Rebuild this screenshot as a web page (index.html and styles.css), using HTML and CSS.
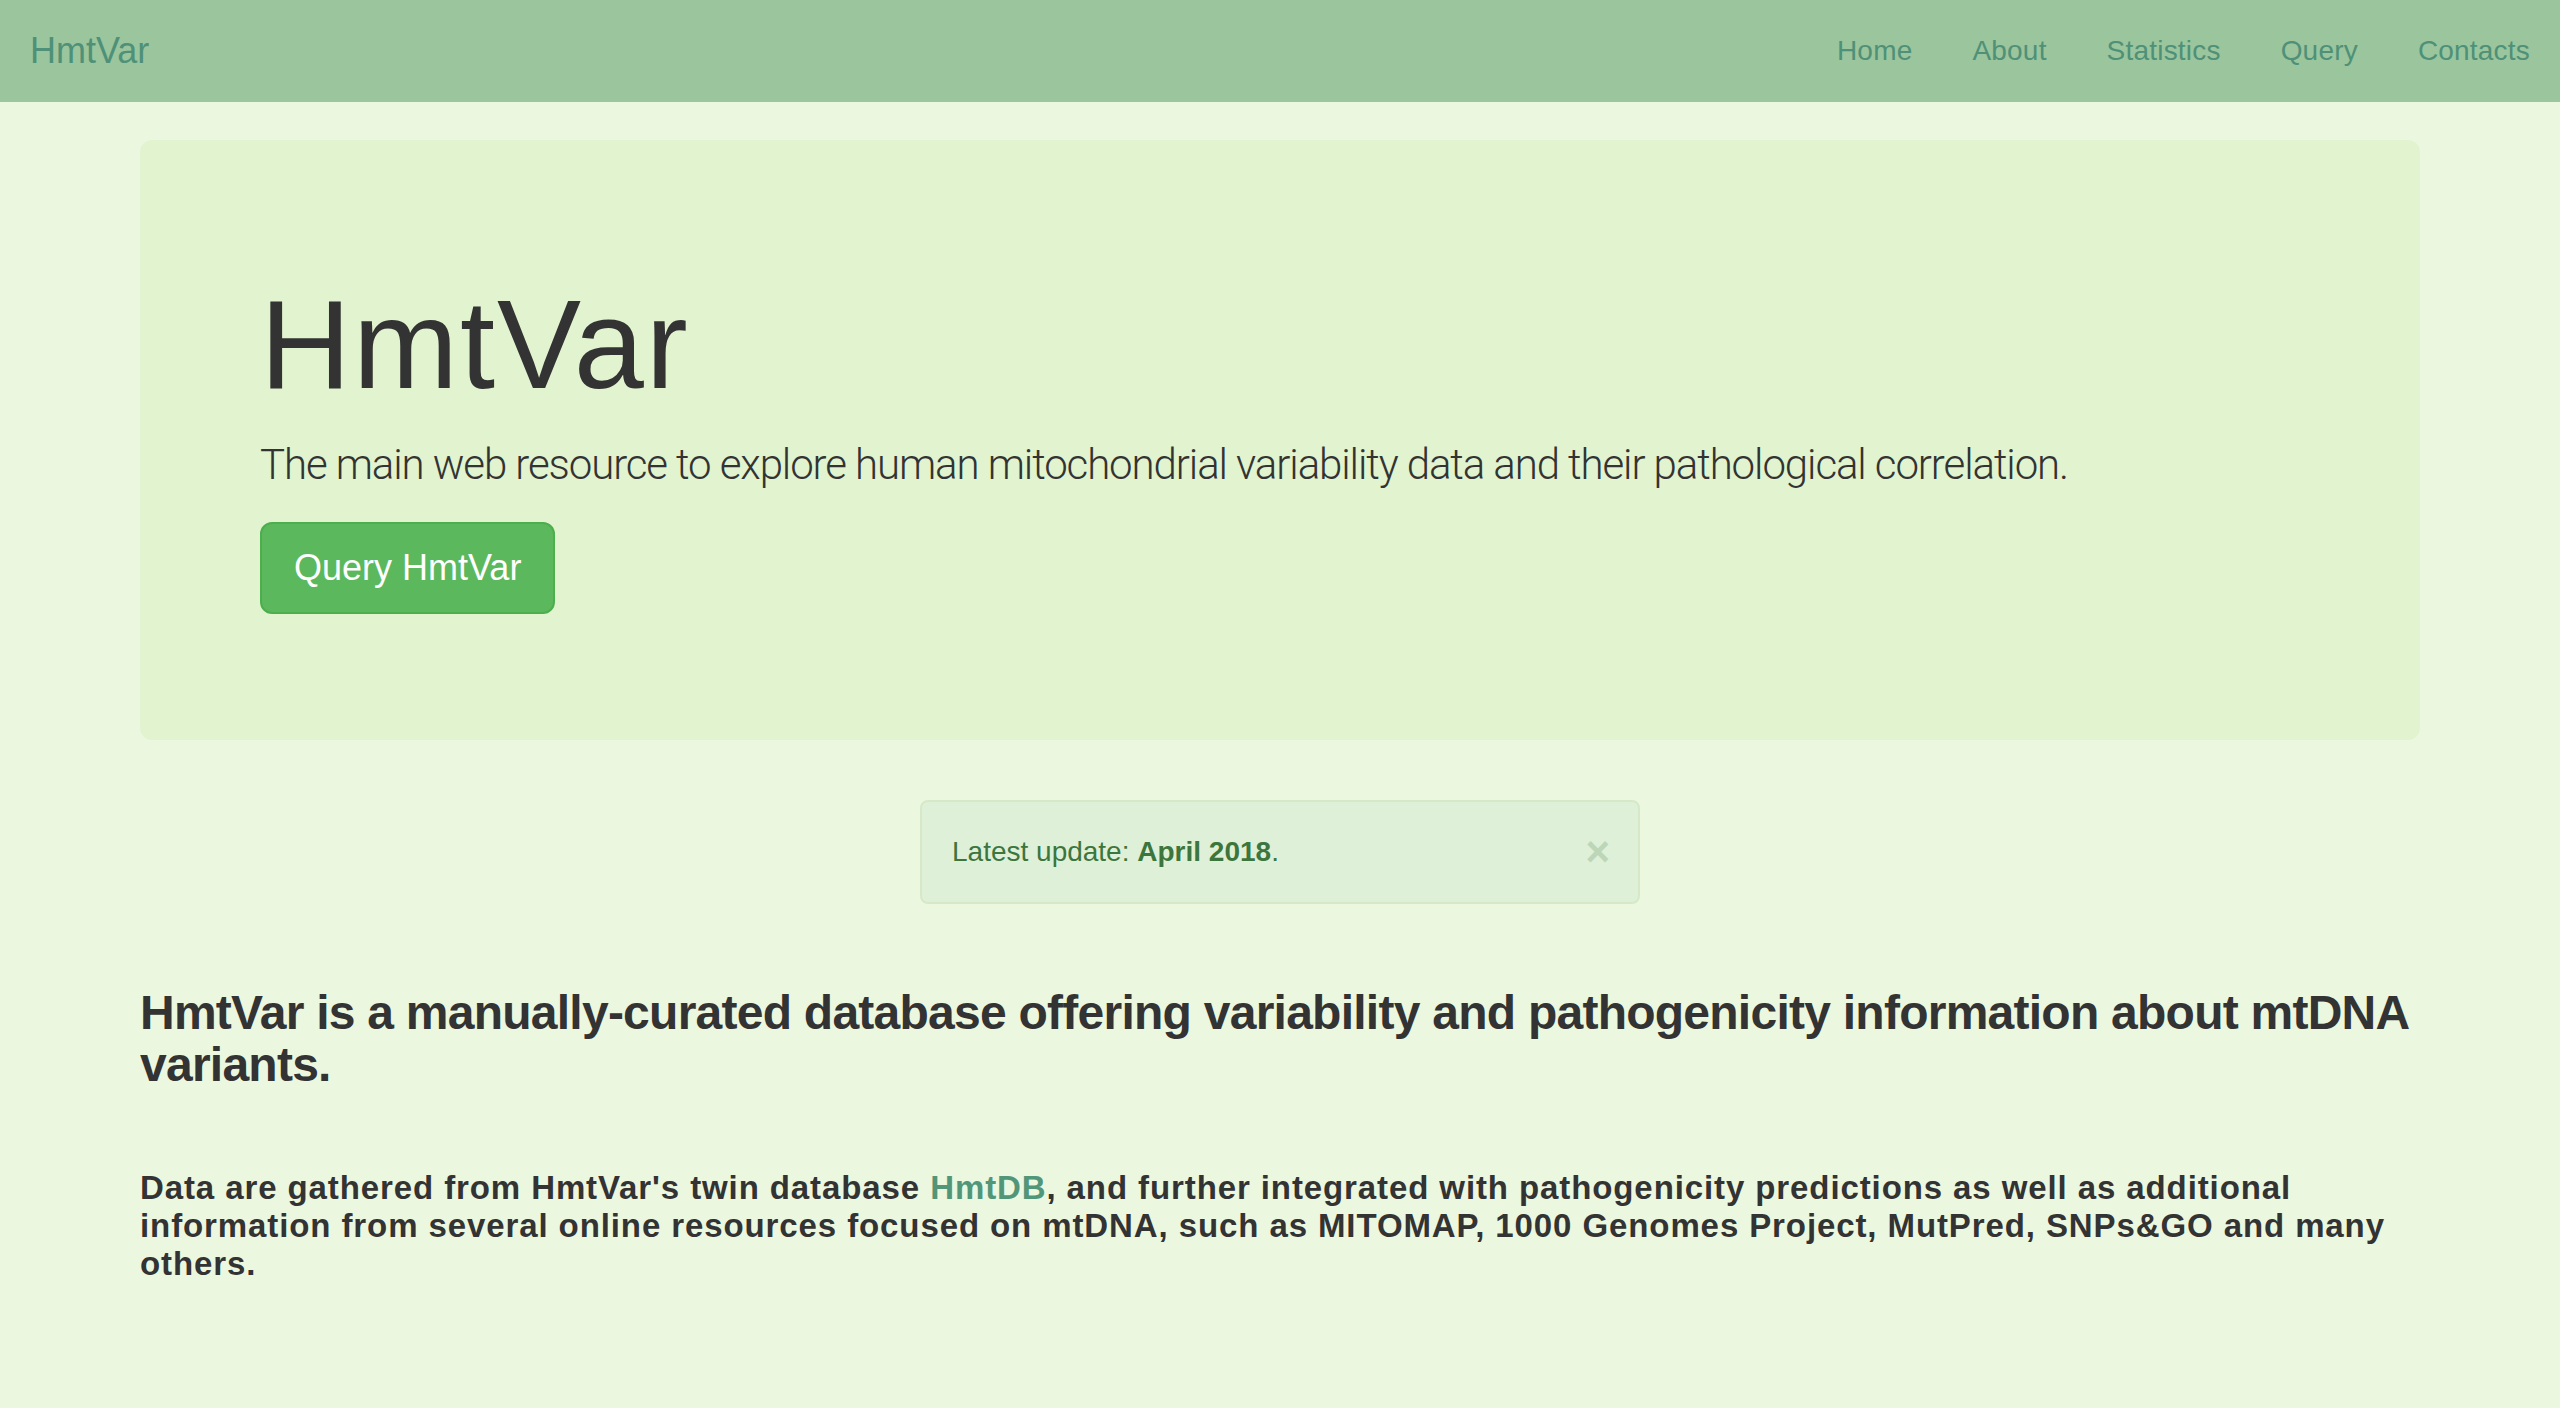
FILE: index.html
```html
<!DOCTYPE html>
<html lang="en">
<head>
<meta charset="utf-8">
<title>HmtVar</title>
<link rel="stylesheet" href="styles.css">
</head>
<body>
<nav class="navbar">
  <a class="brand" href="#">HmtVar</a>
  <ul class="nav-links">
    <li><a href="#">Home</a></li>
    <li><a href="#">About</a></li>
    <li><a href="#">Statistics</a></li>
    <li><a href="#">Query</a></li>
    <li><a href="#">Contacts</a></li>
  </ul>
</nav>
<main class="container">
  <section class="jumbotron">
    <h1 class="title">HmtVar</h1>
    <p class="lead">The main web resource to explore human mitochondrial variability data and their pathological correlation.</p>
    <div class="cta-wrap"><a class="btn-query" href="#">Query HmtVar</a></div>
  </section>
  <div class="alert">
    <span class="alert-text">Latest update: <strong>April 2018</strong>.</span>
    <button class="close" type="button">&times;</button>
  </div>
  <h3 class="intro">HmtVar is a manually-curated database offering variability and pathogenicity information about mtDNA variants.</h3>
  <p class="details">Data are gathered from HmtVar's twin database <a href="#" class="link">HmtDB</a>, and further integrated with pathogenicity predictions as well as additional information from several online resources focused on mtDNA, such as MITOMAP, 1000 Genomes Project, MutPred, SNPs&amp;GO and many others.</p>
</main>
</body>
</html>
```

FILE: styles.css
```css
html, body {
  margin: 0;
  padding: 0;
}
body {
  background: #ecf7e0;
  font-family: "Liberation Sans", Arial, Helvetica, sans-serif;
  color: #333333;
  font-size: 28px;
  line-height: 40px;
}
a { text-decoration: none; }

.navbar {
  display: flex;
  justify-content: space-between;
  align-items: center;
  height: 102px;
  background: #9bc59d;
  margin-bottom: 38px;
}
.brand {
  font-size: 36px;
  line-height: 40px;
  padding: 30px;
  color: #4e9178;
}
.nav-links {
  display: flex;
  list-style: none;
  margin: 0;
  padding: 0;
}
.nav-links a {
  display: block;
  padding: 30px;
  font-size: 28px;
  line-height: 40px;
  letter-spacing: 0.2px;
  color: #4e9178;
}

.container {
  width: 2280px;
  margin: 0 auto;
}

.jumbotron {
  background: #e1f3cf;
  border-radius: 12px;
  padding: 96px 120px;
  margin-bottom: 60px;
}
.title {
  font-size: 126px;
  line-height: 1.1;
  font-weight: 400;
  letter-spacing: 2px;
  margin: 40px 0 20px;
  color: #333333;
}
.lead {
  font-family: Roboto, "Liberation Sans", sans-serif;
  font-size: 42px;
  font-weight: 300;
  line-height: 60px;
  letter-spacing: -1.1px;
  margin: 0 0 27px;
  color: #333333;
}
.cta-wrap {
  display: flex;
  margin-bottom: 30px;
}
.btn-query {
  display: inline-block;
  padding: 20px 32px;
  font-size: 36px;
  line-height: 48px;
  color: #ffffff;
  background: #5cb85c;
  border: 2px solid #4cae4c;
  border-radius: 12px;
}

.alert {
  box-sizing: border-box;
  width: 720px;
  margin: 0 auto;
  display: flex;
  align-items: center;
  justify-content: space-between;
  padding: 30px 28px 30px 30px;
  background: #dff0d8;
  border: 2px solid #d6e9c6;
  border-radius: 8px;
  color: #3c763d;
  font-size: 28px;
  line-height: 40px;
}
.alert strong { font-weight: 700; }
.close {
  background: none;
  border: 0;
  padding: 0;
  font-family: "Liberation Sans", Arial, sans-serif;
  font-size: 42px;
  font-weight: 700;
  line-height: 40px;
  color: #bcd6b7;
  cursor: pointer;
}

.intro {
  font-size: 48px;
  line-height: 52.8px;
  font-weight: 700;
  letter-spacing: -0.75px;
  margin: 83px 0 0;
  color: #333333;
}
.details {
  font-size: 33px;
  line-height: 38px;
  font-weight: 700;
  letter-spacing: 0.9px;
  margin: 77px 0 0;
  color: #333333;
}
.link {
  color: #529679;
  font-weight: inherit;
}
```
